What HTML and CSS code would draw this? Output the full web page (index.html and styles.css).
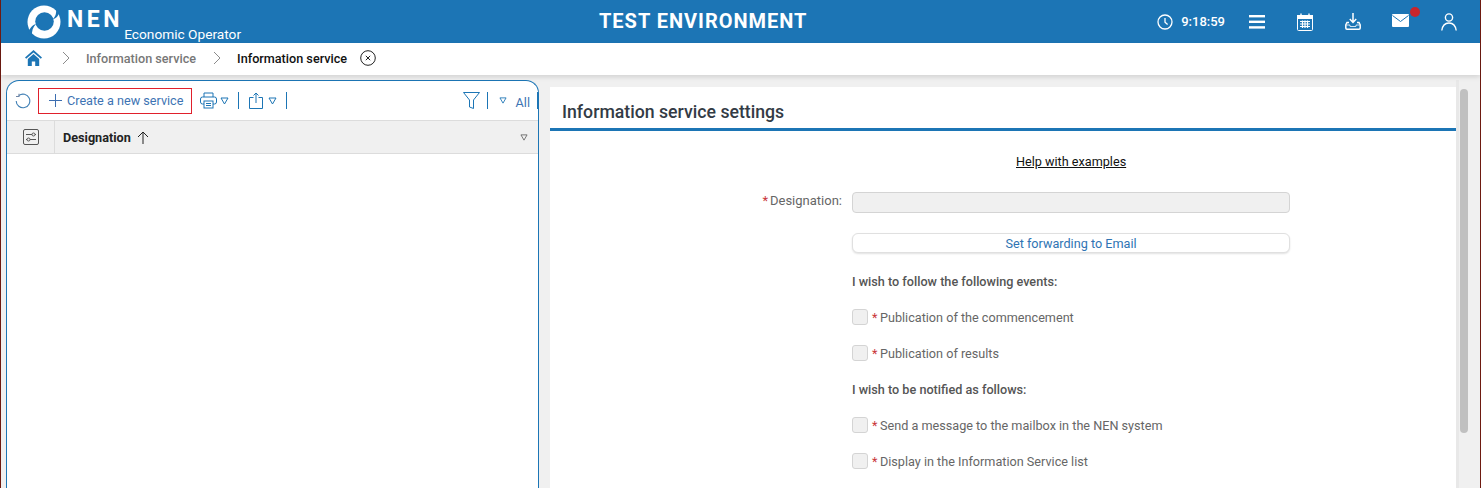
FILE: index.html
```html
<!DOCTYPE html>
<html lang="en">
<head>
<meta charset="utf-8">
<title>Information service</title>
<link rel="stylesheet" href="styles.css">
</head>
<body>
<div class="app">
  <header class="topbar">
    <div class="brand">
      <svg class="logo" width="34" height="34" viewBox="0 0 34 34"><circle cx="17" cy="17" r="16.500" fill="#fff"/><circle cx="17.500" cy="16.500" r="9.300" fill="#1c75b5"/><path d="M9 19C6 22 4.500 26 5 31.500L1.500 28C2 24 5 20 9 19z" fill="#1c75b5"/><path d="M25.500 14.500C28.500 12 29.800 8 29 2.500L32.500 6C32 10 29.500 13.500 25.500 14.500z" fill="#1c75b5"/></svg>
      <span class="brand-name">NEN</span>
      <span class="brand-sub">Economic Operator</span>
    </div>
    <div class="env">TEST ENVIRONMENT</div>
    <div class="tools">
      <div class="clock">
        <svg width="16" height="16" viewBox="0 0 16 16" fill="none" stroke="#fff" stroke-width="1.300"><circle cx="8" cy="8" r="7"/><path d="M8 4v4.200l2.600 2.400"/></svg>
        <span>9:18:59</span>
      </div>
      <svg class="tool-menu" width="16" height="14" viewBox="0 0 16 14" fill="#fff"><rect y="0" width="16" height="2.400"/><rect y="5.600" width="16" height="2.400"/><rect y="11.200" width="16" height="2.400"/></svg>
      <svg class="tool-cal" width="16" height="18" viewBox="0 0 16 18" fill="none" stroke="#fff"><rect x="0.500" y="2.500" width="15" height="15" rx="1"/><rect x="0.500" y="2.500" width="15" height="3" fill="#fff"/><path d="M4 0.500v3M12 0.500v3" stroke-width="1.400"/><path d="M3 8.500h10M3 11h10M3 13.500h10M5.500 7.500v7.500M8 7.500v7.500M10.500 7.500v7.500" stroke-width="1.200"/></svg>
      <svg class="tool-dl" width="16" height="17" viewBox="0 0 16 17" fill="none" stroke="#fff" stroke-width="1.500"><path d="M8 0v9M4.800 6l3.200 3.400L11.200 6"/><path d="M4 9.500H2L.8 12v3c0 .8.400 1.200 1.200 1.200h12c.8 0 1.200-.4 1.200-1.200v-3L14 9.500h-2"/><path d="M1 12h3.500l1 1.500h5l1-1.500H15" stroke="#cfe2f0" stroke-width="1.200"/></svg>
      <div class="mail">
        <svg width="17" height="13" viewBox="0 0 17 13"><rect width="17" height="13" rx="1" fill="#fff"/><path d="M0.500 1.500L8.500 7.500L16.500 1.500" fill="none" stroke="#1c75b5" stroke-width="1"/></svg>
        <span class="dot"></span>
      </div>
      <svg class="tool-user" width="16" height="18" viewBox="0 0 16 18" fill="none" stroke="#fff" stroke-width="1.400"><circle cx="8" cy="4.500" r="3.600"/><path d="M.8 17.500C1.500 12.500 4.500 10 8 10s6.500 2.500 7.200 7.500"/></svg>
    </div>
  </header>

  <nav class="crumbs">
    <svg class="home" width="17" height="16" viewBox="0 0 17 16"><path d="M8.500 0L0 7.500l1.200 1.200L8.500 2.400l7.300 6.300L17 7.500z" fill="#1c75b5"/><path d="M2.800 9L8.500 4l5.700 5v7h-4v-4.500H6.800V16h-4z" fill="#1c75b5"/></svg>
    <svg class="chev" width="8" height="14" viewBox="0 0 8 14"><path d="M1 1l6 6-6 6" fill="none" stroke="#8b8b8b"/></svg>
    <span class="crumb">Information service</span>
    <svg class="chev" width="8" height="14" viewBox="0 0 8 14"><path d="M1 1l6 6-6 6" fill="none" stroke="#8b8b8b"/></svg>
    <span class="crumb crumb-active">Information service</span>
    <svg class="close" width="16" height="16" viewBox="0 0 16 16" fill="none" stroke="#222"><circle cx="8" cy="8" r="7.300"/><path d="M5.800 5.800l4.400 4.400M10.200 5.800l-4.400 4.400"/></svg>
  </nav>

  <main class="content">
    <section class="list-panel">
      <div class="toolbar">
        <svg class="refresh" width="16" height="16" viewBox="0 0 16 16" fill="none" stroke="#3f7fb5" stroke-width="1.100"><path d="M3.800 2.600A6.800 6.800 0 1 1 1.200 8"/><path d="M4 .8v2.700H1" stroke="#6f86a6"/></svg>
        <div class="create"><svg width="13" height="13" viewBox="0 0 13 13" stroke="#3d6eb0"><path d="M6.500 0v13M0 6.500h13"/></svg><span>Create a new service</span></div>
        <svg class="print" width="17" height="17" viewBox="0 0 17 17" fill="none" stroke="#1c75b5"><path d="M4 5V1h9v4"/><rect x=".5" y="5" width="16" height="7" rx="2"/><rect x="4" y="9" width="9" height="7" fill="#fff"/><path d="M6 11.500h5M6 13.500h5"/></svg>
        <svg class="caret" width="9" height="8" viewBox="0 0 9 8"><path d="M1 1h7L4.500 7z" fill="none" stroke="#1c75b5"/></svg>
        <span class="sep"></span>
        <svg class="share" width="14" height="17" viewBox="0 0 14 17" fill="none" stroke="#1c75b5"><path d="M4.500 5.500H.5v11h13v-11h-4"/><path d="M7 11V1M4.500 3.500L7 1l2.500 2.500"/></svg>
        <svg class="caret" width="9" height="8" viewBox="0 0 9 8"><path d="M1 1h7L4.500 7z" fill="none" stroke="#1c75b5"/></svg>
        <span class="sep"></span>
        <span class="spacer"></span>
        <svg class="funnel" width="17" height="17" viewBox="0 0 17 17" fill="none" stroke="#1c75b5"><path d="M.5.500h16l-6 7.500v8.500l-4-1.500V8z"/></svg>
        <span class="sep sep-filter"></span>
        <svg class="caret caret-all" width="8" height="7" viewBox="0 0 9 8"><path d="M1 1h7L4.500 7z" fill="none" stroke="#1c75b5"/></svg>
        <span class="all">All</span>
        <span class="sep sep-end"></span>
      </div>
      <div class="grid-head">
        <div class="col-settings">
          <svg width="16" height="16" viewBox="0 0 16 16" fill="none" stroke="#555"><rect x=".5" y=".5" width="15" height="15" rx="1.500"/><path d="M3 5.500h6M12 5.500h1M3 10.500h1M7 10.500h6"/><circle cx="10.500" cy="5.500" r="1.500"/><circle cx="5.500" cy="10.500" r="1.500"/></svg>
        </div>
        <div class="col-name">
          <span>Designation</span>
          <svg width="12" height="13" viewBox="0 0 12 13" fill="none" stroke="#222"><path d="M6 13V1M1 6l5-5 5 5"/></svg>
          <svg class="col-caret" width="8" height="7" viewBox="0 0 9 8"><path d="M1 1h7L4.500 7z" fill="none" stroke="#666"/></svg>
        </div>
      </div>
    </section>

    <section class="form-panel">
      <h1 class="form-title">Information service settings</h1>
      <div class="form-body">
        <a class="help" href="#">Help with examples</a>
        <div class="field">
          <label class="field-label"><span class="req">*</span>Designation:</label>
          <div class="input"></div>
        </div>
        <div class="forward">Set forwarding to Email</div>
        <div class="group-title first">I wish to follow the following events:</div>
        <div class="check"><span class="box"></span><span class="req">*</span>Publication of the commencement</div>
        <div class="check"><span class="box"></span><span class="req">*</span>Publication of results</div>
        <div class="group-title">I wish to be notified as follows:</div>
        <div class="check"><span class="box"></span><span class="req">*</span>Send a message to the mailbox in the NEN system</div>
        <div class="check"><span class="box"></span><span class="req">*</span>Display in the Information Service list</div>
      </div>
    </section>

    <div class="scrollbar"><div class="thumb"></div></div>
  </main>
</div>
</body>
</html>
```
FILE: styles.css
```css
* { box-sizing: border-box; }
html, body { margin: 0; padding: 0; height: 100%; overflow: hidden; }
body { font-family: Roboto, "Liberation Sans", sans-serif; font-size: 12.650px; color: #555; }
.app {
  height: 488px; display: flex; flex-direction: column;
  border-left: 1px solid #6e1a10; border-right: 1px solid #6e1a10;
  background: #f0f0f0;
}
.topbar { height: 43px; flex: none; background: #1c75b5; color: #fff; display: grid; grid-template-columns: 598px auto 1fr; align-items: center; }
.brand { display: flex; align-items: center; padding-left: 26px; height: 43px; }
.logo { flex: none; }
.brand-name { font-size: 23px; font-weight: 700; letter-spacing: 3.600px; margin-left: 6px; margin-top: -4px; }
.brand-sub { font-size: 13.700px; margin-left: 1px; align-self: flex-end; margin-bottom: 1px; }
.env { font-size: 20px; font-weight: 700; letter-spacing: .98px; white-space: nowrap; margin-bottom: 2px; }
.tools { display: flex; align-items: center; justify-content: flex-end; padding-right: 23px; height: 43px; }
.clock { display: flex; align-items: center; gap: 8px; font-size: 13px; font-weight: 500; margin-right: 24px; }
.tool-menu { margin-right: 32px; }
.tool-cal { margin-right: 32px; }
.tool-dl { margin-right: 31px; }
.mail { position: relative; display: flex; margin-right: 32px; margin-top: -2px; }
.dot { position: absolute; top: -7px; right: -11px; width: 10px; height: 10px; border-radius: 50%; background: #c9252b; }

.crumbs { height: 32px; flex: none; background: #fff; display: flex; align-items: center; padding: 0 0 2px 24px; box-shadow: 0 2px 5px rgba(0,0,0,.13); position: relative; z-index: 1; }
.home { margin-right: 20px; }
.chev { margin-right: 16px; flex: none; }
.crumb { font-weight: 500; color: #777; margin-right: 17px; }
.crumb-active { color: #111; margin-right: 13px; }

.content { flex: 1; min-height: 0; display: flex; align-items: flex-start; padding: 5px 0 0 5px; }
.list-panel { width: 533px; height: 420px; flex: none; background: #fff; border: 1px solid #1c75b5; border-bottom: 0; border-radius: 13px 13px 0 0; }
.toolbar { height: 39px; display: flex; align-items: center; padding-left: 8px; }
.refresh { margin-right: 7px; }
.create { height: 26px; width: 154px; flex: none; align-self: flex-start; margin: 7px 8px 0 0; padding: 0 0 1px 10px; background: #fff; border: 1px solid #e0202c; display: flex; align-items: center; gap: 5px; color: #3d73b3; }
.print { margin-right: 3px; }
.share { margin-right: 5px; }
.caret { flex: none; }
.sep { width: 1px; height: 17px; background: #1c75b5; margin: 0 10px 0 9px; flex: none; }
.spacer { flex: 1; }
.funnel { margin-right: 7px; }
.sep-filter { margin: 0 11px 0 0; }
.caret-all { margin-right: 9px; }
.all { color: #3d73b3; margin-top: 3px; }
.sep-end { margin: 0 0 0 7px; }
.grid-head { height: 34px; display: flex; background: #f0f0f0; border-top: 1px solid #dcdcdc; border-bottom: 1px solid #dcdcdc; }
.col-settings { width: 48px; display: flex; align-items: center; justify-content: center; border-right: 1px solid #dcdcdc; }
.col-name { flex: 1; display: flex; align-items: center; gap: 6px; padding: 0 10px 0 8px; font-weight: 700; color: #222; }
.col-caret { margin-left: auto; }

.form-panel { width: 906px; height: 401px; flex: none; background: #fff; margin: 7px 0 0 11px; }
.form-title { margin: 0; height: 44px; padding: 14px 12px 0; border-bottom: 3px solid #1c75b5; font-size: 17.700px; line-height: 22px; font-weight: 500; color: #333b45; }
.form-body { display: flex; flex-direction: column; padding-left: 302px; }
.help { align-self: flex-start; margin: 22px 0 0 164px; color: #111; line-height: 17px; }
.field { position: relative; margin-top: 22px; }
.field-label { position: absolute; right: calc(100% + 10px); top: 0; line-height: 18px; white-space: nowrap; font-size: 13px; color: #666; }
.req { color: #c9363a; margin-right: 2px; }
.input { width: 438px; height: 21px; background: #f0f0f0; border: 1px solid #d4d4d4; border-radius: 4px; }
.forward { width: 438px; height: 20px; margin-top: 20px; background: #fff; border: 1px solid #e0e0e0; border-radius: 6px; box-shadow: 0 1px 2px rgba(0,0,0,.12); color: #2f74b3; text-align: center; line-height: 20px; }
.group-title { font-weight: 500; line-height: 16px; height: 16px; margin-top: 20px; }
.group-title.first { margin-top: 21px; }
.check { height: 16px; margin-top: 20px; display: flex; align-items: center; line-height: 16px; color: #666; }
.box { width: 16px; height: 16px; background: #f0f0f0; border: 1px solid #d4d4d4; border-radius: 3px; margin: -2px 4px 0 0; flex: none; }
.check .req { margin-right: 2.500px; }

.scrollbar { width: 24px; padding: 9px 0 0 1px; height: 413px; flex: none; border-left: 3px solid #e8e8e8; }
.thumb { width: 8px; height: 344px; background: #c0c0c0; border-radius: 4px; }
```
